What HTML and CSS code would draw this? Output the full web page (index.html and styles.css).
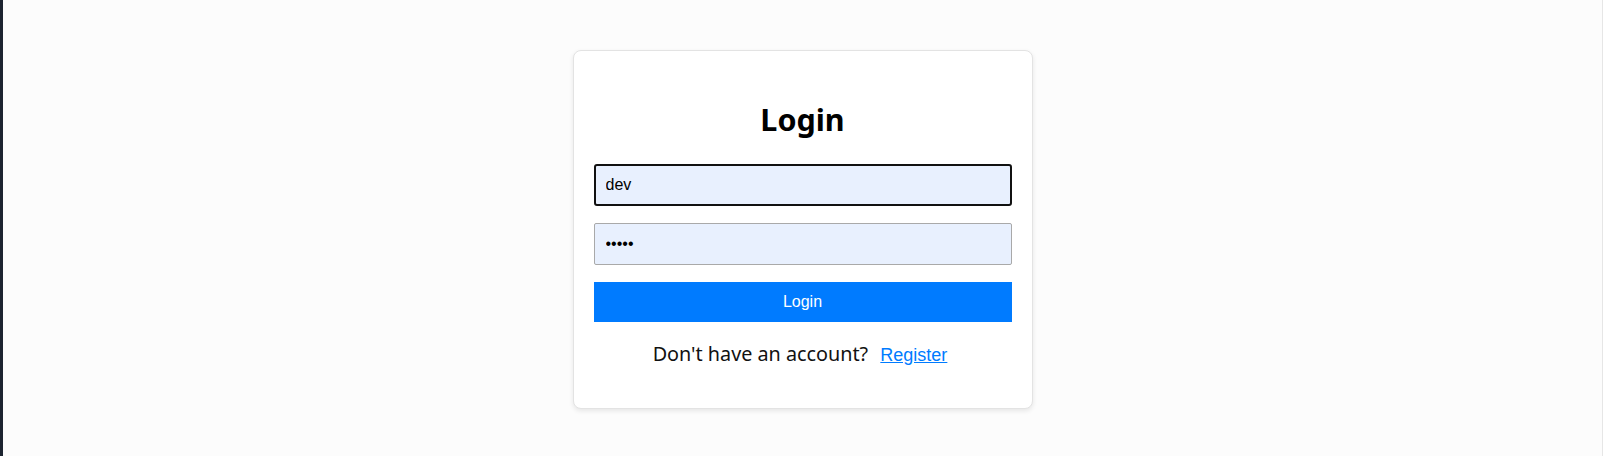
FILE: index.html
```html
<!DOCTYPE html>
<html lang="en">
<head>
<meta charset="utf-8">
<title>Login</title>
<link rel="stylesheet" href="styles.css">
</head>
<body>
  <div class="sidebar-edge"></div>
  <main class="main">
    <div class="card">
      <h1 class="title">Login</h1>
      <form class="form">
        <input class="field field-focused" type="text" value="dev">
        <input class="field field-pass" type="password" value="12345">
        <button class="btn" type="button">Login</button>
      </form>
      <p class="switch">Don't have an account? <a class="link" href="#">Register</a></p>
    </div>
  </main>
</body>
</html>
```
FILE: styles.css
```css
* { box-sizing: border-box; }
html, body { margin: 0; padding: 0; height: 100%; }
body {
  display: flex;
  min-height: 100vh;
  background: #fcfcfc;
  font-family: "Noto Sans", "Open Sans", sans-serif;
  color: #111;
}
.sidebar-edge {
  width: 3px;
  flex: 0 0 3px;
  background: #1c2430;
}
.main {
  flex: 1;
  display: flex;
  align-items: center;
  justify-content: center;
  padding-top: 2px;
  border-right: 1px solid #e6e6e6;
}
.card {
  width: 460px;
  background: #fff;
  border: 1px solid #e3e3e3;
  border-radius: 8px;
  box-shadow: 0 2px 5px rgba(0, 0, 0, 0.09);
  padding: 20px;
}
.title {
  margin: 28px 0 25px;
  font-size: 30.5px;
  line-height: 40px;
  font-weight: 700;
  text-align: center;
  color: #000;
}
.form { display: block; margin: 0; }
.field {
  display: block;
  width: 100%;
  height: 42px;
  padding: 0 11px;
  font-family: "Liberation Sans", Arial, sans-serif;
  font-size: 16px;
  color: #000;
  background: #e8f0fe;
  border: 1px solid #a9a9a9;
  border-radius: 2px;
  outline: none;
}
.field-focused {
  border: 2px solid #111;
  border-radius: 3px;
  padding: 0 10px;
  margin-bottom: 17px;
}
.field-pass { margin-bottom: 17px; }
.btn {
  display: block;
  width: 100%;
  height: 40px;
  border: none;
  border-radius: 0;
  background: #007bff;
  color: #fff;
  font-family: "Liberation Sans", Arial, sans-serif;
  font-size: 16px;
  padding: 0;
}
.switch {
  margin: 18px 0 19px;
  font-size: 19.8px;
  line-height: 28px;
  text-align: center;
  color: #111;
}
.link {
  margin-left: 7px;
  margin-right: 5px;
  font-family: "Liberation Sans", Arial, sans-serif;
  font-size: 18px;
  color: #007bff;
  text-decoration: underline;
}
```
